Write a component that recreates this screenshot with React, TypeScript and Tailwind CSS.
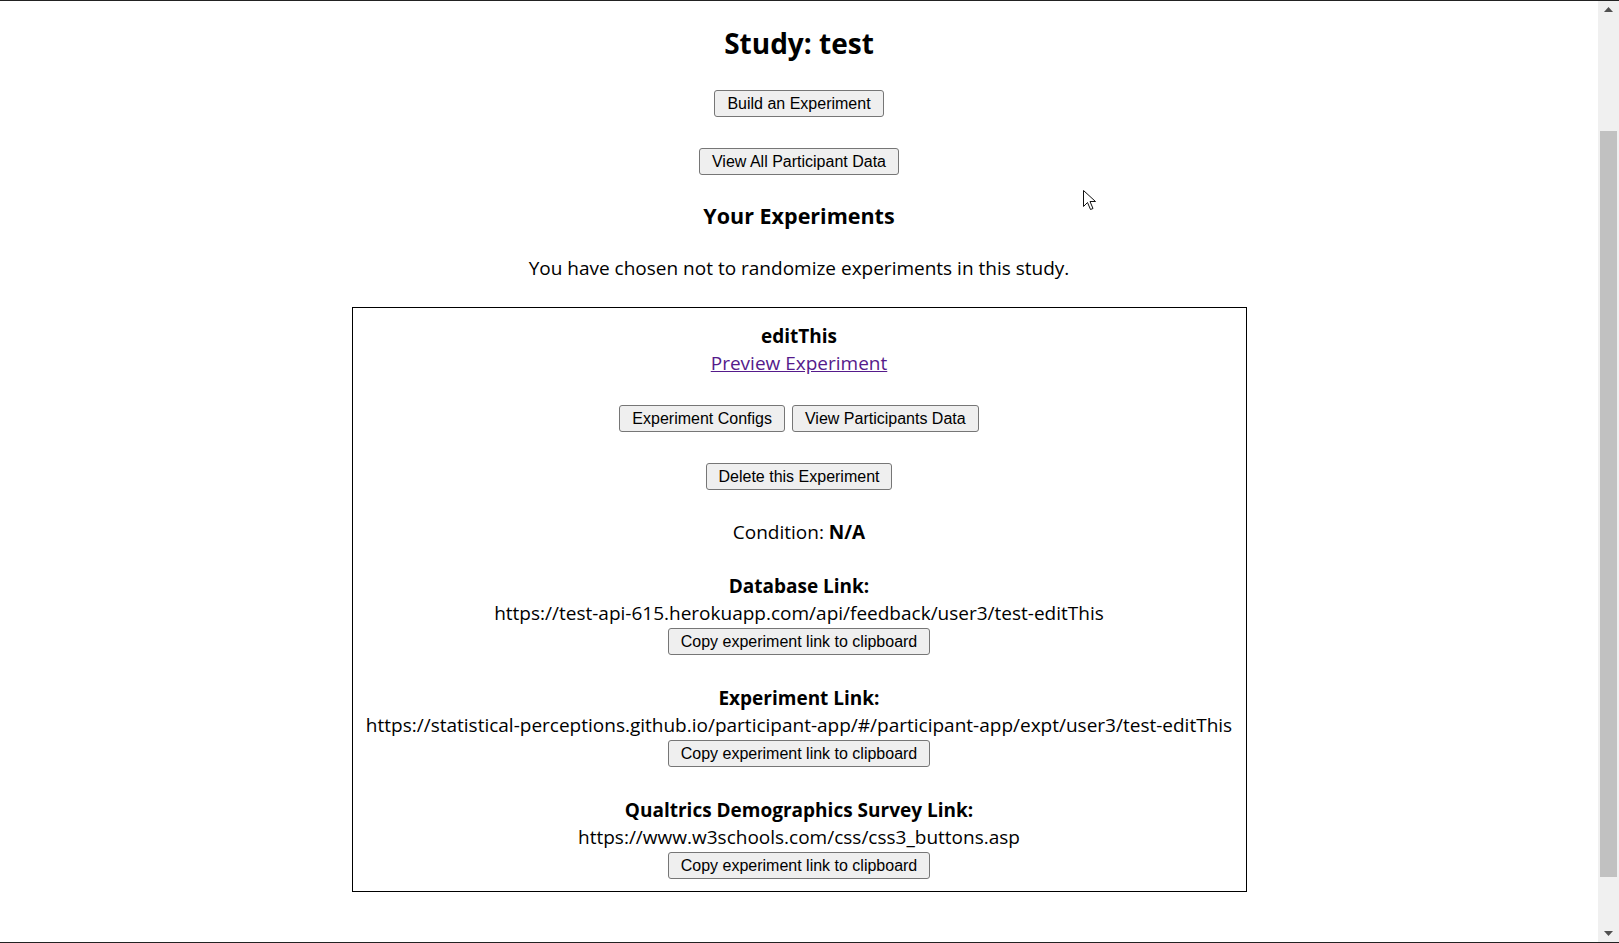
const FONT = "font-['Segoe_UI','Open_Sans',sans-serif]";

function Btn({ children, className = "" }: { children: React.ReactNode; className?: string }) {
  return (
    <button
      type="button"
      className={`rounded-[3px] border border-[#767676] bg-[#efefef] px-3 py-[3px] font-['Liberation_Sans',Arial,sans-serif] text-[16px] leading-[19px] text-black ${className}`}
    >
      {children}
    </button>
  );
}

function LinkBlock({ label, url }: { label: string; url: string }) {
  return (
    <div className="flex flex-col items-center">
      <div className="font-bold">{label}</div>
      <div className="whitespace-nowrap">{url}</div>
      <Btn className="mt-[1px]">Copy experiment link to clipboard</Btn>
    </div>
  );
}

function Scrollbar() {
  return (
    <div className="flex w-[21px] shrink-0 flex-col items-center bg-[#f0f0f0]">
      <div className="flex h-[17px] w-full items-center justify-center">
        <svg width="9" height="5" viewBox="0 0 9 5">
          <path d="M0 5 L4.5 0 L9 5 Z" fill="#505050" />
        </svg>
      </div>
      <div className="flex w-full flex-1 flex-col px-[2px]">
        <div className="h-[113px]" />
        <div className="h-[746px] w-full bg-[#c1c1c1]" />
      </div>
      <div className="flex h-[17px] w-full items-center justify-center">
        <svg width="9" height="5" viewBox="0 0 9 5">
          <path d="M0 0 L9 0 L4.5 5 Z" fill="#505050" />
        </svg>
      </div>
    </div>
  );
}

export default function App() {
  return (
    <div className="relative flex h-[943px] w-full overflow-hidden border-y border-[#222] bg-white">
      <main className={`flex flex-1 flex-col items-center text-black ${FONT} text-[19px] leading-[27px]`}>
        <h1 className="mt-[21px] text-[28px] font-bold leading-[42px]">Study: test</h1>

        <div className="mt-[25px]">
          <Btn>Build an Experiment</Btn>
        </div>
        <div className="mt-[30px]">
          <Btn>View All Participant Data</Btn>
        </div>

        <h2 className="mt-[25px] text-[21.5px] font-bold leading-[32px]">Your Experiments</h2>
        <p className="mt-[23px]">You have chosen not to randomize experiments in this study.</p>

        <section className="mt-[25px] flex w-[895px] flex-col items-center border border-black pb-[12px] pt-[15px]">
          <div className="font-bold">editThis</div>
          <a href="#" className="text-[#551a8b] underline">
            Preview Experiment
          </a>

          <div className="mt-[28px] flex gap-[7px]">
            <Btn>Experiment Configs</Btn>
            <Btn>View Participants Data</Btn>
          </div>

          <div className="mt-[30px]">
            <Btn>Delete this Experiment</Btn>
          </div>

          <p className="mt-[29px]">
            Condition: <span className="font-bold">N/A</span>
          </p>

          <div className="mt-[27px] flex flex-col items-center gap-[30px]">
            <LinkBlock
              label="Database Link:"
              url="https://test-api-615.herokuapp.com/api/feedback/user3/test-editThis"
            />
            <LinkBlock
              label="Experiment Link:"
              url="https://statistical-perceptions.github.io/participant-app/#/participant-app/expt/user3/test-editThis"
            />
            <LinkBlock
              label="Qualtrics Demographics Survey Link:"
              url="https://www.w3schools.com/css/css3_buttons.asp"
            />
          </div>
        </section>
      </main>

      <Scrollbar />

      <svg
        className="pointer-events-none absolute left-[1083px] top-[189px]"
        width="13"
        height="21"
        viewBox="0 0 13 21"
      >
        <path
          d="M0.5 0.5 L0.5 16.5 L4.5 12.5 L7.5 19.5 L10 18.5 L7 11.5 L12.5 11.5 Z"
          fill="white"
          stroke="#111"
          strokeWidth="1"
          strokeLinejoin="round"
        />
      </svg>
    </div>
  );
}
